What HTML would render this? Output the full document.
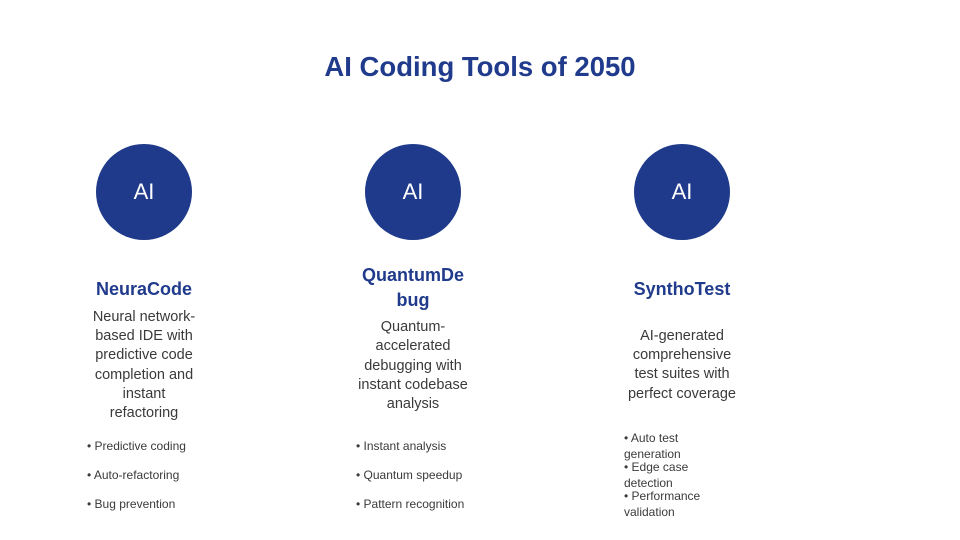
<!DOCTYPE html>
<html><head><meta charset="utf-8"><style>
html,body{margin:0;padding:0}
body{width:960px;height:540px;background:#fff;position:relative;overflow:hidden;font-family:"Liberation Sans",Arial,sans-serif}
.t{position:absolute;width:220px;text-align:center;line-height:20px;height:20px;white-space:nowrap;color:#3a3a3a;font-size:14.5px}
.h{color:#203a8c;font-weight:bold;font-size:18px}
.b{position:absolute;line-height:16px;height:16px;white-space:nowrap;color:#3a3a3a;font-size:12px}
.c{position:absolute;width:96px;height:96px;border-radius:50%;background:#1f3a8a;color:#fff;font-size:22px;line-height:96px;text-align:center}
</style></head><body>
<div style="position:absolute;left:0;width:960px;top:50px;text-align:center;font-size:27.5px;font-weight:bold;color:#203a8c;line-height:34px">AI Coding Tools of 2050</div>

<div class="c" style="left:96px;top:144px">AI</div>
<div class="c" style="left:365px;top:144px">AI</div>
<div class="c" style="left:634px;top:144px">AI</div>

<div class="t h" style="left:34px;top:279px">NeuraCode</div>
<div class="t" style="left:34px;top:307px">Neural network-</div>
<div class="t" style="left:34px;top:326px">based IDE with</div>
<div class="t" style="left:34px;top:345px">predictive code</div>
<div class="t" style="left:34px;top:365px">completion and</div>
<div class="t" style="left:34px;top:384px">instant</div>
<div class="t" style="left:34px;top:403px">refactoring</div>
<div class="b" style="left:87px;top:438px">• Predictive coding</div>
<div class="b" style="left:87px;top:467px">• Auto-refactoring</div>
<div class="b" style="left:87px;top:496px">• Bug prevention</div>

<div class="t h" style="left:303px;top:265px">QuantumDe</div>
<div class="t h" style="left:303px;top:290px">bug</div>
<div class="t" style="left:303px;top:317px">Quantum-</div>
<div class="t" style="left:303px;top:336px">accelerated</div>
<div class="t" style="left:303px;top:356px">debugging with</div>
<div class="t" style="left:303px;top:375px">instant codebase</div>
<div class="t" style="left:303px;top:394px">analysis</div>
<div class="b" style="left:356px;top:438px">• Instant analysis</div>
<div class="b" style="left:356px;top:467px">• Quantum speedup</div>
<div class="b" style="left:356px;top:496px">• Pattern recognition</div>

<div class="t h" style="left:572px;top:279px">SynthoTest</div>
<div class="t" style="left:572px;top:326px">AI-generated</div>
<div class="t" style="left:572px;top:345px">comprehensive</div>
<div class="t" style="left:572px;top:364px">test suites with</div>
<div class="t" style="left:572px;top:384px">perfect coverage</div>
<div class="b" style="left:624px;top:430px">• Auto test</div>
<div class="b" style="left:624px;top:446px">generation</div>
<div class="b" style="left:624px;top:459px">• Edge case</div>
<div class="b" style="left:624px;top:475px">detection</div>
<div class="b" style="left:624px;top:488px">• Performance</div>
<div class="b" style="left:624px;top:504px">validation</div>
</body></html>
